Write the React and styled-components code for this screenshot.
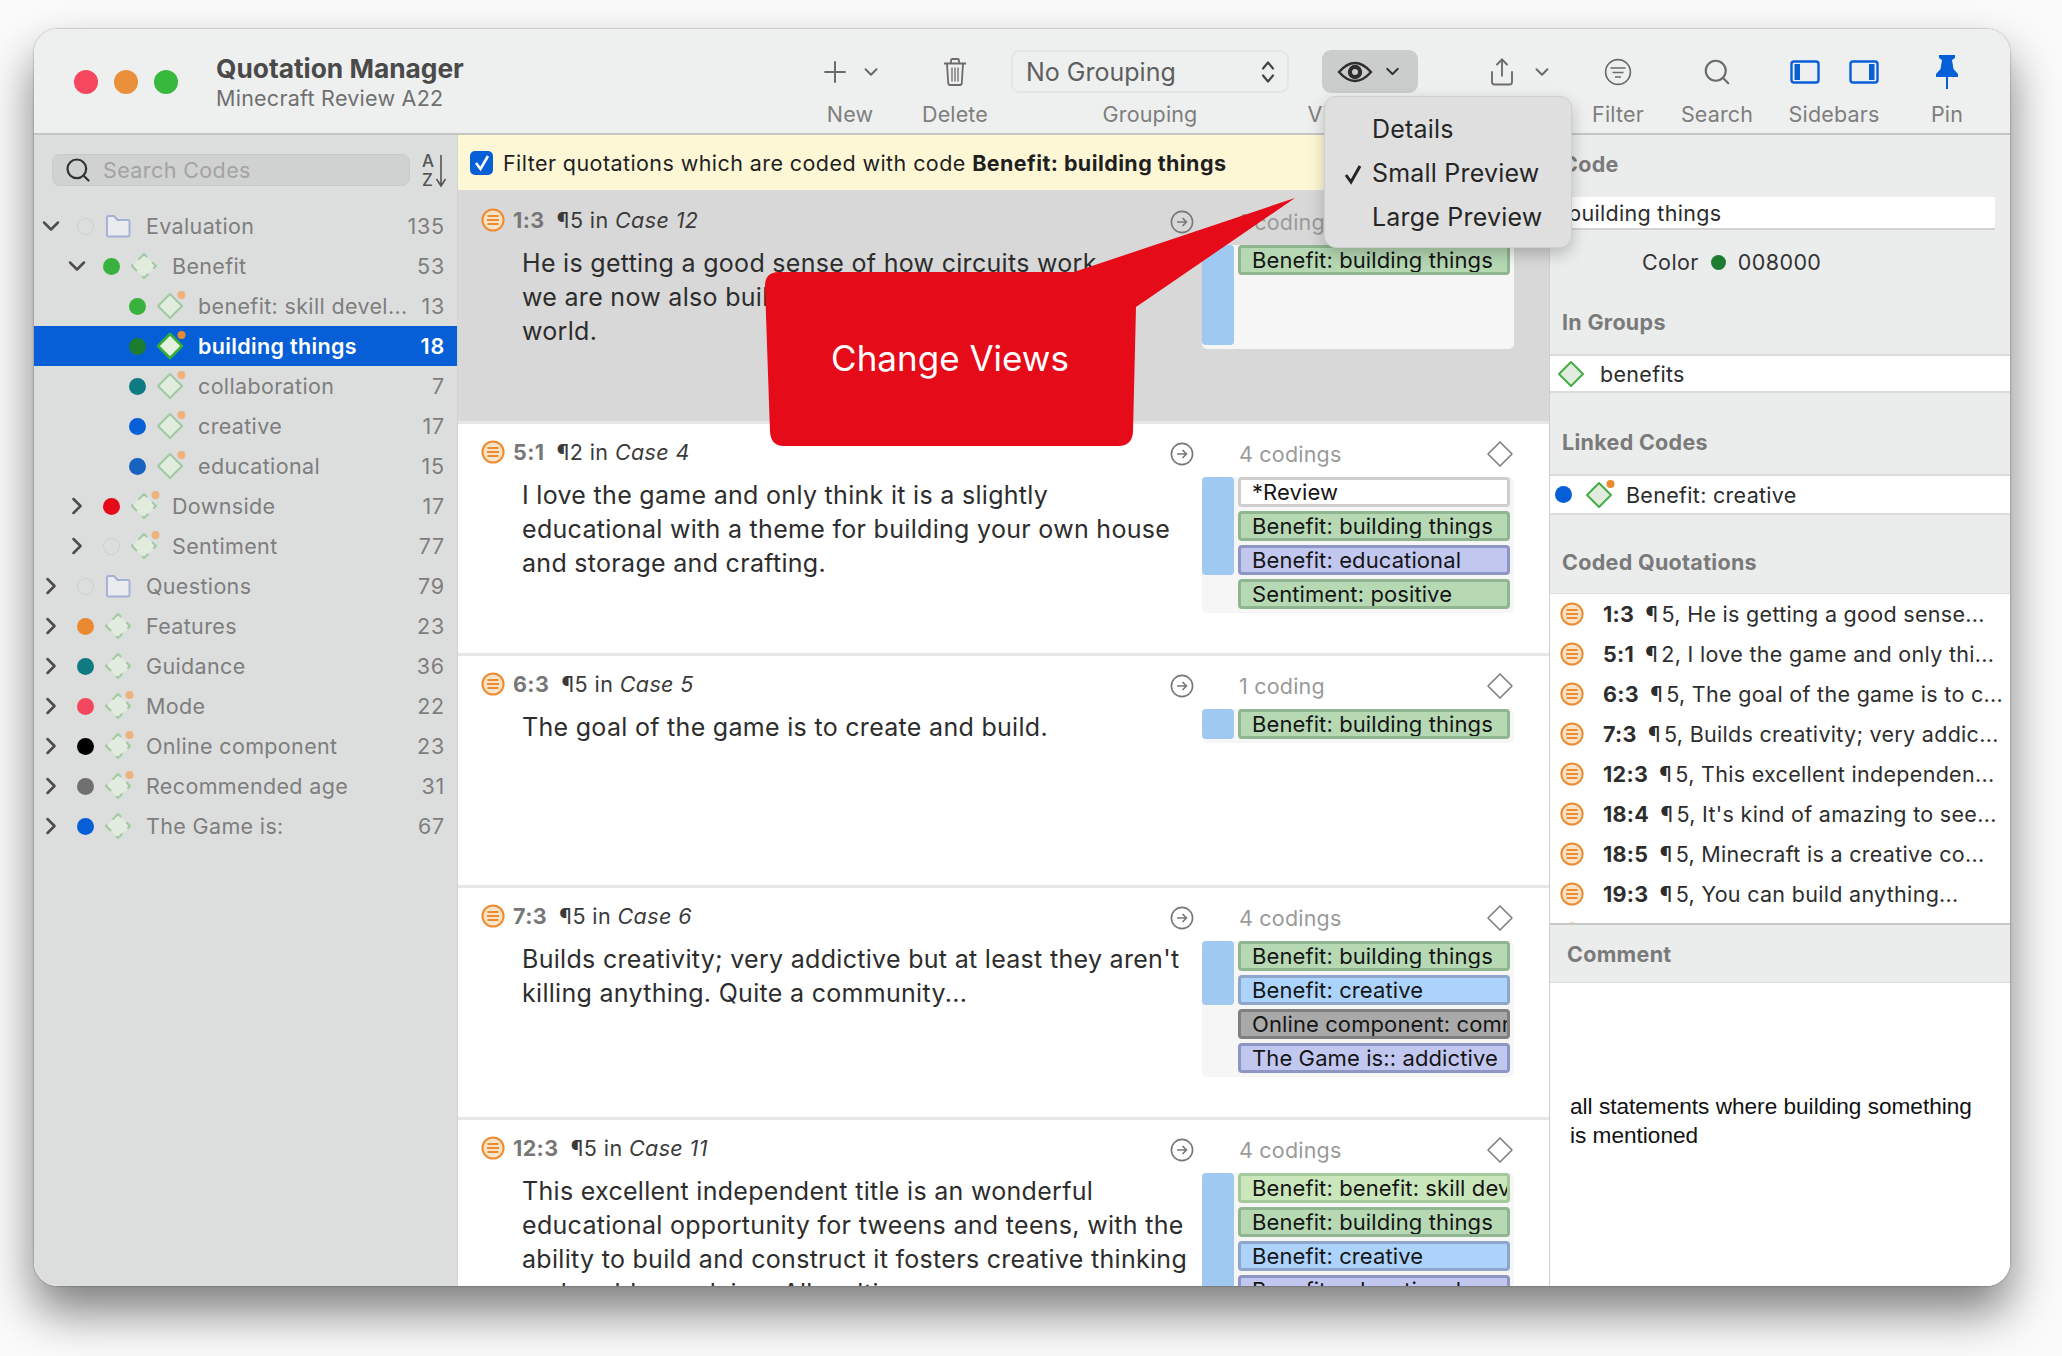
import React from 'react';
import styled, { createGlobalStyle } from 'styled-components';
import { Plus, ChevronDown, ChevronRight, Search, Share } from 'lucide-react';

const GlobalStyle = createGlobalStyle`
    html, body {
        margin: 0;
        padding: 0;
        background: #fbfbfb;
    }
    * {
        box-sizing: border-box;
    }
`

const FONT = `Inter, "Noto Sans", "Liberation Sans", sans-serif`;

const Stage = styled.div`
    width: 2062px;
    height: 1356px;
    padding: 29px 52px 70px 34px;
    overflow: hidden;
    font-family: ${FONT};
`

const Window = styled.div`
    position: relative;
    width: 1976px;
    height: 1257px;
    border-radius: 24px;
    background: #fff;
    overflow: hidden;
    display: flex;
    flex-direction: column;
`

const WindowShadow = styled.div`
    width: 1976px;
    height: 1257px;
    border-radius: 24px;
    box-shadow: 0 26px 48px rgba(0, 0, 0, 0.5), 0 0 2px rgba(0, 0, 0, 0.45);
`

const Toolbar = styled.div`
    height: 106px;
    flex: none;
    display: flex;
    background: #eeefef;
    border-bottom: 2px solid #c4c5c5;
`

const Traffic = styled.div`
    display: flex;
    gap: 16px;
    padding: 41px 0 0 40px;
    width: 182px;
`

const Light = styled.span`
    width: 24px;
    height: 24px;
    border-radius: 50%;
    background: ${p => p.$c};
`

const TitleBlock = styled.div`
    width: 595px;
    padding-top: 24px;
`

const Title = styled.div`
    font-size: 26.3px;
    line-height: 32px;
    font-weight: 700;
    color: #4a4a4a;
`

const Subtitle = styled.div`
    font-size: 21.5px;
    line-height: 26px;
    letter-spacing: 0.25px;
    color: #6f6f6f;
`

const ToolItem = styled.div`
    width: ${p => p.$w}px;
    margin-left: ${p => p.$ml || 0}px;
    padding-top: 21px;
    display: flex;
    flex-direction: column;
    align-items: center;
    flex: none;
`

const ToolIcons = styled.div`
    height: 43px;
    display: flex;
    align-items: center;
    justify-content: center;
    gap: ${p => p.$gap || 0}px;
    color: #6b6b6b;
    width: 100%;
`

const ToolLabel = styled.div`
    margin-top: 8px;
    font-size: 21.5px;
    line-height: 26px;
    letter-spacing: 0.15px;
    color: #7e7e7e;
    white-space: nowrap;
`

const GroupSelect = styled.div`
    width: 100%;
    height: 43px;
    display: flex;
    align-items: center;
    justify-content: space-between;
    padding: 0 11px 0 13px;
    border: 2px solid #e4e5e5;
    border-radius: 9px;
    font-size: 25px;
    color: #5f5f5f;
`

const ViewButton = styled.div`
    width: 100%;
    height: 43px;
    display: flex;
    align-items: center;
    justify-content: center;
    gap: 9px;
    border-radius: 9px;
    background: #cbcccc;
    color: #2e2e2e;
`

const Body = styled.div`
    flex: 1;
    min-height: 0;
    display: flex;
`

const Sidebar = styled.div`
    width: 424px;
    flex: none;
    background: #dcdddd;
    border-right: 1px solid #d2d2d2;
`

const SearchRow = styled.div`
    display: flex;
    align-items: center;
    padding: 17px 0 18px 18px;
    gap: 12px;
`

const SearchBox = styled.div`
    width: 358px;
    height: 32px;
    display: flex;
    align-items: center;
    gap: 11px;
    padding-left: 11px;
    background: #d0d1d1;
    border: 1px solid #c9caca;
    border-radius: 8px;
    font-size: 21.5px;
    letter-spacing: 0.4px;
    color: #a3a3a3;
`

const SortIcon = styled.div`
    position: relative;
    width: 26px;
    height: 36px;
    font-size: 17px;
    line-height: 19px;
    font-weight: 500;
    color: #555;
`

const SortArrow = styled.svg`
    position: absolute;
    left: 13px;
    top: 2px;
`

const TreeRow = styled.div`
    height: 40px;
    display: flex;
    align-items: center;
    padding-left: ${p => p.$level * 26}px;
    padding-right: 12px;
    background: ${p => p.$selected ? '#075fd8' : 'transparent'};
    color: ${p => p.$selected ? '#fff' : '#7e7e7e'};
    font-size: 21.5px;
    font-weight: ${p => p.$selected ? 600 : 400};
`

const ChevronSlot = styled.div`
    width: 34px;
    flex: none;
    display: flex;
    justify-content: center;
    color: #4d4d4d;
`

const DotSlot = styled.div`
    width: 34px;
    flex: none;
    display: flex;
    justify-content: center;
`

const ColorDot = styled.span`
    display: inline-block;
    flex: none;
    width: ${p => p.$size || 17}px;
    height: ${p => p.$size || 17}px;
    border-radius: 50%;
    background: ${p => p.$c || 'transparent'};
    border: ${p => p.$c ? '0' : '1.5px solid #cdcece'};
`

const IconSlot = styled.div`
    width: 32px;
    flex: none;
    display: flex;
    justify-content: center;
`

const TreeName = styled.div`
    flex: 1;
    min-width: 0;
    margin-left: 12px;
    letter-spacing: 0.35px;
    white-space: nowrap;
`

const TreeCount = styled.div`
    flex: none;
    letter-spacing: 0.8px;
`

const Main = styled.div`
    width: 1092px;
    flex: none;
    border-right: 1px solid #cfcfcf;
`

const FilterBar = styled.div`
    height: 55px;
    display: flex;
    align-items: center;
    gap: 10px;
    padding-left: 12px;
    background: #fdf7d6;
    font-size: 21.5px;
    letter-spacing: 0.42px;
    color: #1f1f1f;
    b {
        font-weight: 700;
    }
`

const CheckBox = styled.div`
    width: 23px;
    height: 24px;
    border-radius: 5px;
    background: #075fd8;
    display: flex;
    align-items: center;
    justify-content: center;
`

const QuoteRow = styled.div`
    height: ${p => p.$selected ? 234 : 232}px;
    padding-top: ${p => p.$selected ? 16 : 14}px;
    display: flex;
    background: ${p => p.$selected ? '#d8d8d8' : '#fff'};
    border-bottom: 3px solid #e6e6e6;
`

const QuoteLeft = styled.div`
    width: 744px;
    flex: none;
    padding-left: 23px;
`

const QuoteHead = styled.div`
    height: 28px;
    display: flex;
    align-items: center;
    gap: 8px;
    font-size: 21.5px;
    color: #3a3a3a;
    letter-spacing: 0.4px;
    strong {
        color: #777;
        font-weight: 700;
        margin-right: 12px;
    }
    em {
        font-style: italic;
    }
`

const QuoteText = styled.div`
    width: 672px;
    margin: 12px 0 0 41px;
    font-size: 25px;
    line-height: 34px;
    letter-spacing: 0.3px;
    color: #2d2d2d;
`

const GoSlot = styled.div`
    width: 60px;
    flex: none;
    margin-left: -50px;
    display: flex;
    justify-content: center;
    height: 32px;
    align-items: center;
`

const CodingsCol = styled.div`
    width: 312px;
    flex: none;
    margin-left: -10px;
`

const CodingsHead = styled.div`
    height: 32px;
    display: flex;
    align-items: center;
    justify-content: space-between;
    padding: 0 0 0 37px;
    font-size: 21.5px;
    color: #9a9a9a;
    letter-spacing: 0.2px;
`

const CodingsBlock = styled.div`
    display: flex;
    align-items: flex-start;
    gap: 4px;
    margin-top: 7px;
    padding-bottom: 4px;
    background: #f6f6f6;
    border-radius: 5px;
`

const TextBar = styled.div`
    width: 32px;
    flex: none;
    height: ${p => p.$h}px;
    background: #9fc9f1;
    border-radius: 4px;
`

const CodeLabels = styled.div`
    width: 272px;
    display: flex;
    flex-direction: column;
    gap: 4px;
`

const CODE_STYLES = {
    green: ['#b6d9b4', '#90b690'],
    white: ['#ffffff', '#cecece'],
    lavender: ['#c2c7f0', '#8f96c4'],
    blue: ['#acd3fc', '#8fa6cb'],
    gray: ['#a9a9a9', '#7f7f7f'],
    lime: ['#cae7bc', '#a3c99c'],
}

const CodeLabel = styled.div`
    height: 30px;
    flex: none;
    padding: 0 0 0 11px;
    background: ${p => CODE_STYLES[p.$kind][0]};
    border: 3px solid ${p => CODE_STYLES[p.$kind][1]};
    border-radius: 4px;
    font-size: 22px;
    line-height: 24px;
    letter-spacing: 0.1px;
    color: #151515;
    white-space: nowrap;
    overflow: hidden;
`

const Panel = styled.div`
    flex: 1;
    min-width: 0;
    display: flex;
    flex-direction: column;
    background: #ebecec;
`

const PanelHead = styled.div`
    height: ${p => p.$h}px;
    flex: none;
    display: flex;
    align-items: flex-end;
    padding: 0 0 ${p => p.$pb || 19}px 12px;
    font-size: 21.5px;
    line-height: 26px;
    font-weight: 700;
    letter-spacing: 0.3px;
    color: #7a7a7a;
`

const NameField = styled.div`
    height: 33px;
    margin: 0 15px 0 6px;
    flex: none;
    padding-left: 12px;
    background: #fff;
    border-bottom: 2px solid #d4d4d4;
    font-size: 21.5px;
    line-height: 33px;
    letter-spacing: 0.3px;
    color: #2b2b2b;
`

const ColorRow = styled.div`
    height: 64px;
    flex: none;
    display: flex;
    align-items: center;
    padding-left: 92px;
    font-size: 21.5px;
    color: #333;
    letter-spacing: 0.4px;
    span + span {
        margin-left: 12px;
    }
`

const WhiteRow = styled.div`
    height: ${p => p.$h}px;
    flex: none;
    display: flex;
    align-items: center;
    padding-left: ${p => p.$pl}px;
    gap: ${p => p.$gap}px;
    background: #fff;
    border-top: 2px solid #dcdcdc;
    border-bottom: 2px solid #dcdcdc;
    font-size: 21.5px;
    color: #2b2b2b;
    letter-spacing: 0.3px;
`

const QuoteList = styled.div`
    height: 332px;
    flex: none;
    overflow: hidden;
    background: #fff;
    border-top: 1px solid #dcdcdc;
    border-bottom: 2px solid #c9c9c9;
`

const QuoteItem = styled.div`
    height: 40px;
    display: flex;
    align-items: center;
    padding-left: 10px;
    gap: 19px;
    font-size: 21.5px;
    color: #2d2d2d;
    letter-spacing: 0.3px;
    white-space: nowrap;
    b {
        font-weight: 700;
        margin-right: 11px;
    }
`

const Pilcrow = styled.span`
    margin-right: 3px;
`

const CommentHead = styled.div`
    height: 58px;
    flex: none;
    display: flex;
    align-items: center;
    padding-left: 17px;
    font-size: 21.5px;
    font-weight: 700;
    letter-spacing: 0.3px;
    color: #7a7a7a;
    border-bottom: 1px solid #dedede;
`

const CommentBody = styled.div`
    flex: 1;
    padding: 109px 0 0 20px;
    background: #fff;
    font-family: "Liberation Sans", Arial, sans-serif;
    font-size: 22.6px;
    line-height: 29px;
    color: #111;
`

const Callout = styled.div`
    position: absolute;
    left: 726px;
    top: 161px;
    width: 540px;
    height: 260px;
`

const CalloutText = styled.div`
    position: absolute;
    left: 0;
    top: 144px;
    width: 380px;
    text-align: center;
    font-size: 35px;
    line-height: 48px;
    color: #fff;
`

const Menu = styled.div`
    position: absolute;
    left: 1290px;
    top: 67px;
    width: 248px;
    height: 152px;
    padding-top: 10px;
    background: #dfdfdf;
    border: 1px solid #cfcfcf;
    border-radius: 12px;
    box-shadow: 0 6px 16px rgba(0, 0, 0, 0.22);
`

const MenuItem = styled.div`
    position: relative;
    height: 44px;
    padding-left: 47px;
    font-size: 25px;
    line-height: 44px;
    letter-spacing: 0.2px;
    color: #262626;
`

const MenuCheck = styled.svg`
    position: absolute;
    left: 18px;
    top: 12px;
`

function QuoteIcon() {
    return (
        <svg width="24" height="24" viewBox="0 0 24 24" style={{ flex: 'none' }}>
            <circle cx="12" cy="12" r="10.6" fill="#f8e3c6" stroke="#ee8b2f" strokeWidth="2" />
            <path d="M6.5 8h11M6 12h12M6.5 16h11" stroke="#ee8b2f" strokeWidth="2" />
        </svg>
    )
}

function CodeIcon({ dashed, badge, selected, pale = true }) {
    const stroke = selected ? '#35b035' : pale ? '#a1c9a1' : '#45ad45';
    const fill = selected ? '#e4f1e0' : '#e1ecdf';
    const badgeColor = selected ? '#ea8a30' : pale ? '#f0b27c' : '#ea8a30';
    return (
        <svg width="32" height="30" viewBox="0 0 32 30" style={{ flex: 'none' }}>
            <path
                d="M16 3 L28 15 L16 27 L4 15 Z"
                fill={fill}
                stroke={stroke}
                strokeWidth={selected ? 2.6 : 2}
                strokeLinejoin="round"
                strokeDasharray={dashed ? '8.9 7.2' : undefined}
                strokeDashoffset={dashed ? '4.45' : undefined}
            />
            {badge && <circle cx="27.5" cy="4" r="4" fill={badgeColor} />}
        </svg>
    )
}

function FolderIcon() {
    return (
        <svg width="26" height="24" viewBox="0 0 26 24">
            <path
                d="M2 3.5 Q2 2 3.5 2 H9 L12.5 6 H23 Q24.5 6 24.5 7.5 V21 Q24.5 22.5 23 22.5 H3.5 Q2 22.5 2 21 Z"
                fill="#e9ebee"
                stroke="#a5b2d6"
                strokeWidth="2"
            />
        </svg>
    )
}

function GoIcon() {
    return (
        <svg width="24" height="24" viewBox="0 0 24 24" fill="none" stroke="#777" strokeWidth="1.6">
            <circle cx="12" cy="12" r="10.6" />
            <path d="M7 12h9.5M12.5 8l4 4-4 4" />
        </svg>
    )
}

function OutlineDiamond() {
    return (
        <svg width="28" height="28" viewBox="0 0 28 28" fill="none" stroke="#808080" strokeWidth="1.6">
            <path d="M14 2 L26 14 L14 26 L2 14 Z" strokeLinejoin="round" />
        </svg>
    )
}

function TrashIcon() {
    return (
        <svg width="26" height="30" viewBox="0 0 26 30" fill="none" stroke="#6b6b6b" strokeWidth="1.8">
            <path d="M2 6.5h22M9 6V3.4Q9 2 10.4 2h5.2Q17 2 17 3.4V6" />
            <path d="M5 7l1.2 19q.1 2 2 2h9.6q1.9 0 2-2L21 7" />
            <path d="M10 10.5v14M13 10.5v14M16 10.5v14" strokeWidth="1.3" />
        </svg>
    )
}

function StepperIcon() {
    return (
        <svg width="16" height="26" viewBox="0 0 16 26" fill="none" stroke="#444" strokeWidth="2.2" strokeLinecap="round" strokeLinejoin="round">
            <path d="M3 9.5 L8 3.5 L13 9.5M3 16.5 L8 22.5 L13 16.5" />
        </svg>
    )
}

function EyeIcon() {
    return (
        <svg width="36" height="26" viewBox="0 0 36 26">
            <path d="M2 13 Q18 -5 34 13 Q18 31 2 13 Z" fill="none" stroke="#2e2e2e" strokeWidth="2.4" />
            <circle cx="18" cy="13" r="7.2" fill="#2e2e2e" />
            <circle cx="18" cy="13" r="3" fill="#cbcccc" />
        </svg>
    )
}

function FilterIcon() {
    return (
        <svg width="28" height="28" viewBox="0 0 28 28" fill="none" stroke="#6b6b6b" strokeWidth="1.7">
            <circle cx="14" cy="14" r="12.4" />
            <path d="M6.5 10h15M8.5 14.5h11M11 19h6" />
        </svg>
    )
}

function SidebarIcon({ right }) {
    return (
        <svg width="30" height="24" viewBox="0 0 30 24" fill="none">
            <rect x="1.5" y="1.5" width="27" height="21" rx="2.5" stroke="#075fd8" strokeWidth="2.4" />
            <rect x={right ? 20 : 4.5} y="4" width="5.5" height="16" fill="#075fd8" />
        </svg>
    )
}

function PinIcon() {
    return (
        <svg width="24" height="36" viewBox="0 0 24 36" fill="#075fd8">
            <path d="M4 1 H20 V4 L17 6 L18.5 15 L23 20 V23 H1 V20 L5.5 15 L7 6 L4 4 Z" />
            <rect x="11" y="23" width="2" height="12" />
        </svg>
    )
}

const TREE = [
    { level: 0, open: true, folder: true, name: 'Evaluation', count: 135 },
    { level: 1, open: true, dot: '#38b23c', dashed: true, name: 'Benefit', count: 53 },
    { level: 2, leaf: true, dot: '#38b23c', badge: true, name: 'benefit: skill devel...', count: 13 },
    { level: 2, leaf: true, dot: '#1c7d31', badge: true, selected: true, name: 'building things', count: 18 },
    { level: 2, leaf: true, dot: '#0f7a82', badge: true, name: 'collaboration', count: 7 },
    { level: 2, leaf: true, dot: '#075fd8', badge: true, name: 'creative', count: 17 },
    { level: 2, leaf: true, dot: '#1763bf', badge: true, name: 'educational', count: 15 },
    { level: 1, dot: '#e60b19', dashed: true, badge: true, name: 'Downside', count: 17 },
    { level: 1, dashed: true, badge: true, name: 'Sentiment', count: 77 },
    { level: 0, folder: true, name: 'Questions', count: 79 },
    { level: 0, dot: '#ea8a30', dashed: true, name: 'Features', count: 23 },
    { level: 0, dot: '#0f7a82', dashed: true, name: 'Guidance', count: 36 },
    { level: 0, dot: '#f2475f', dashed: true, badge: true, name: 'Mode', count: 22 },
    { level: 0, dot: '#000', dashed: true, badge: true, name: 'Online component', count: 23 },
    { level: 0, dot: '#707070', dashed: true, badge: true, name: 'Recommended age', count: 31 },
    { level: 0, dot: '#075fd8', dashed: true, name: 'The Game is:', count: 67 },
]

const QUOTES = [
    {
        id: '1:3', para: '5', doc: 'Case 12', coding: '1 coding', barH: 100, selected: true,
        text: 'He is getting a good sense of how circuits work, and we are now also building computers in this "virtual" world.',
        codes: [['green', 'Benefit: building things']],
    },
    {
        id: '5:1', para: '2', doc: 'Case 4', coding: '4 codings', barH: 98,
        text: 'I love the game and only think it is a slightly educational with a theme for building your own house and storage and crafting.',
        codes: [['white', '*Review'], ['green', 'Benefit: building things'], ['lavender', 'Benefit: educational'], ['green', 'Sentiment: positive']],
    },
    {
        id: '6:3', para: '5', doc: 'Case 5', coding: '1 coding', barH: 30,
        text: 'The goal of the game is to create and build.',
        codes: [['green', 'Benefit: building things']],
    },
    {
        id: '7:3', para: '5', doc: 'Case 6', coding: '4 codings', barH: 64,
        text: "Builds creativity; very addictive but at least they aren't killing anything. Quite a community...",
        codes: [['green', 'Benefit: building things'], ['blue', 'Benefit: creative'], ['gray', 'Online component: community'], ['lavender', 'The Game is:: addictive']],
    },
    {
        id: '12:3', para: '5', doc: 'Case 11', coding: '4 codings', barH: 132,
        text: 'This excellent independent title is an wonderful educational opportunity for tweens and teens, with the ability to build and construct it fosters creative thinking and problem solving. All multi...',
        codes: [['lime', 'Benefit: benefit: skill development'], ['green', 'Benefit: building things'], ['blue', 'Benefit: creative'], ['lavender', 'Benefit: educational']],
    },
]

const CODED = [
    ['1:3', '5, He is getting a good sense...'],
    ['5:1', "2, I love the game and only thi..."],
    ['6:3', '5, The goal of the game is to c...'],
    ['7:3', '5, Builds creativity; very addic...'],
    ['12:3', '5, This excellent independen...'],
    ['18:4', "5, It's kind of amazing to see..."],
    ['18:5', '5, Minecraft is a creative co...'],
    ['19:3', '5, You can build anything...'],
    ['20:1', '5, ...'],
]

function App() {
    return (
        <Stage>
            <GlobalStyle />
            <WindowShadow>
                <Window>
                    <Toolbar>
                        <Traffic>
                            <Light $c="#f6475f" />
                            <Light $c="#ea8f3a" />
                            <Light $c="#38b83c" />
                        </Traffic>
                        <TitleBlock>
                            <Title>Quotation Manager</Title>
                            <Subtitle>Minecraft Review A22</Subtitle>
                        </TitleBlock>
                        <ToolItem $w={78}>
                            <ToolIcons $gap={8}>
                                <Plus size={34} strokeWidth={1.4} />
                                <ChevronDown size={22} strokeWidth={2.2} />
                            </ToolIcons>
                            <ToolLabel>New</ToolLabel>
                        </ToolItem>
                        <ToolItem $w={80} $ml={26}>
                            <ToolIcons><TrashIcon /></ToolIcons>
                            <ToolLabel>Delete</ToolLabel>
                        </ToolItem>
                        <ToolItem $w={278} $ml={16}>
                            <GroupSelect>No Grouping<StepperIcon /></GroupSelect>
                            <ToolLabel>Grouping</ToolLabel>
                        </ToolItem>
                        <ToolItem $w={96} $ml={33}>
                            <ViewButton>
                                <EyeIcon />
                                <ChevronDown size={21} strokeWidth={2.4} />
                            </ViewButton>
                            <ToolLabel>View Option</ToolLabel>
                        </ToolItem>
                        <ToolItem $w={80} $ml={62}>
                            <ToolIcons $gap={14}>
                                <Share size={30} strokeWidth={1.5} />
                                <ChevronDown size={22} strokeWidth={2.2} />
                            </ToolIcons>
                            <ToolLabel>Share</ToolLabel>
                        </ToolItem>
                        <ToolItem $w={80} $ml={18}>
                            <ToolIcons><FilterIcon /></ToolIcons>
                            <ToolLabel>Filter</ToolLabel>
                        </ToolItem>
                        <ToolItem $w={80} $ml={19}>
                            <ToolIcons><Search size={30} strokeWidth={1.7} /></ToolIcons>
                            <ToolLabel>Search</ToolLabel>
                        </ToolItem>
                        <ToolItem $w={128} $ml={13}>
                            <ToolIcons $gap={29}>
                                <SidebarIcon />
                                <SidebarIcon right />
                            </ToolIcons>
                            <ToolLabel>Sidebars</ToolLabel>
                        </ToolItem>
                        <ToolItem $w={60} $ml={19}>
                            <ToolIcons><PinIcon /></ToolIcons>
                            <ToolLabel>Pin</ToolLabel>
                        </ToolItem>
                    </Toolbar>
                    <Body>
                        <Sidebar>
                            <SearchRow>
                                <SearchBox>
                                    <Search size={28} strokeWidth={1.9} color="#333" />
                                    Search Codes
                                </SearchBox>
                                <SortIcon>
                                    A<br />Z
                                    <SortArrow width="12" height="34" viewBox="0 0 12 34" fill="none" stroke="#555" strokeWidth="1.6">
                                        <path d="M6 1v30M1.5 25 L6 32 L10.5 25" />
                                    </SortArrow>
                                </SortIcon>
                            </SearchRow>
                            {TREE.map(row => (
                                <TreeRow key={row.name} $level={row.level} $selected={row.selected}>
                                    <ChevronSlot>
                                        {!row.leaf && (row.open
                                            ? <ChevronDown size={28} strokeWidth={2.2} />
                                            : <ChevronRight size={28} strokeWidth={2.2} />)}
                                    </ChevronSlot>
                                    <DotSlot><ColorDot $c={row.dot} /></DotSlot>
                                    <IconSlot>
                                        {row.folder
                                            ? <FolderIcon />
                                            : <CodeIcon dashed={row.dashed} badge={row.badge} selected={row.selected} />}
                                    </IconSlot>
                                    <TreeName>{row.name}</TreeName>
                                    <TreeCount>{row.count}</TreeCount>
                                </TreeRow>
                            ))}
                        </Sidebar>
                        <Main>
                            <FilterBar>
                                <CheckBox>
                                    <svg width="16" height="18" viewBox="0 0 16 18" fill="none" stroke="#fff" strokeWidth="2.6">
                                        <path d="M2 9 L6.5 15 L14 2" />
                                    </svg>
                                </CheckBox>
                                <span>Filter quotations which are coded with code <b>Benefit: building things</b></span>
                            </FilterBar>
                            {QUOTES.map(q => (
                                <QuoteRow key={q.id} $selected={q.selected}>
                                    <QuoteLeft>
                                        <QuoteHead>
                                            <QuoteIcon />
                                            <span><strong>{q.id}</strong>¶{q.para} in <em>{q.doc}</em></span>
                                        </QuoteHead>
                                        <QuoteText>{q.text}</QuoteText>
                                    </QuoteLeft>
                                    <GoSlot><GoIcon /></GoSlot>
                                    <CodingsCol>
                                        <CodingsHead>
                                            {q.coding}
                                            <OutlineDiamond />
                                        </CodingsHead>
                                        <CodingsBlock>
                                            <TextBar $h={q.barH} />
                                            <CodeLabels>
                                                {q.codes.map(([kind, label]) => (
                                                    <CodeLabel key={label} $kind={kind}>{label}</CodeLabel>
                                                ))}
                                            </CodeLabels>
                                        </CodingsBlock>
                                    </CodingsCol>
                                </QuoteRow>
                            ))}
                        </Main>
                        <Panel>
                            <PanelHead $h={62} $pb={20}>Code</PanelHead>
                            <NameField>building things</NameField>
                            <ColorRow>
                                <span>Color</span>
                                <span><ColorDot $c="#1c7d31" $size={15} /></span>
                                <span>008000</span>
                            </ColorRow>
                            <PanelHead $h={60}>In Groups</PanelHead>
                            <WhiteRow $h={39} $pl={5} $gap={13}>
                                <CodeIcon pale={false} />
                                benefits
                            </WhiteRow>
                            <PanelHead $h={81}>Linked Codes</PanelHead>
                            <WhiteRow $h={41} $pl={5} $gap={11}>
                                <ColorDot $c="#075fd8" $size={17} />
                                <CodeIcon badge pale={false} />
                                Benefit: creative
                            </WhiteRow>
                            <PanelHead $h={78} $pb={18}>Coded Quotations</PanelHead>
                            <QuoteList>
                                {CODED.map(([id, text]) => (
                                    <QuoteItem key={id}>
                                        <QuoteIcon />
                                        <span><b>{id}</b><Pilcrow>¶</Pilcrow>{text}</span>
                                    </QuoteItem>
                                ))}
                            </QuoteList>
                            <CommentHead>Comment</CommentHead>
                            <CommentBody>
                                all statements where building something<br />is mentioned
                            </CommentBody>
                        </Panel>
                    </Body>
                    <Callout>
                        <svg width="540" height="260" viewBox="0 0 540 260">
                            <path
                                d="M19 82 L314 82 L535 8 L376 117 L373 242 Q372 256 358 256 L24 256 Q11 256 10 242 L5 96 Q5 82 19 82 Z"
                                fill="#e60b19"
                            />
                        </svg>
                        <CalloutText>Change Views</CalloutText>
                    </Callout>
                    <Menu>
                        <MenuItem>Details</MenuItem>
                        <MenuItem>
                            <MenuCheck width="20" height="22" viewBox="0 0 20 22" fill="none" stroke="#262626" strokeWidth="3">
                                <path d="M3 12 L8 19 L17 3" />
                            </MenuCheck>
                            Small Preview
                        </MenuItem>
                        <MenuItem>Large Preview</MenuItem>
                    </Menu>
                </Window>
            </WindowShadow>
        </Stage>
    )
}

export default App;
